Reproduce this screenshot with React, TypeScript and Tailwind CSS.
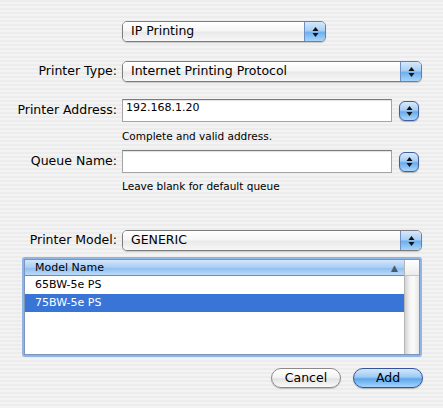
import React from 'react';

function Arrows() {
  return (
    <svg width="7" height="12" viewBox="0 0 7 12">
      <path d="M3.5 1L6.5 5H0.5z" fill="#111" />
      <path d="M0.5 7h6l-3 4z" fill="#111" />
    </svg>
  );
}

function Popup({ label, className }: { label: string; className: string }) {
  return (
    <div
      className={`flex h-[21px] overflow-hidden rounded-[5px] border border-[#7c7c7c] shadow-[0_1px_1px_rgba(0,0,0,0.18)] ${className}`}
    >
      <div className="flex flex-1 items-center bg-[linear-gradient(to_bottom,#ffffff_0%,#f6f6f6_45%,#e9e9e9_55%,#f7f7f7_100%)] pl-[8px] text-[12.5px]">
        {label}
      </div>
      <div className="flex w-[21px] items-center justify-center border-l border-[#6d8fc4] bg-[linear-gradient(to_bottom,#d6e8fb_0%,#a9cff5_45%,#6fb0ee_55%,#a6d5fb_100%)]">
        <Arrows />
      </div>
    </div>
  );
}

function Stepper() {
  return (
    <div className="ml-[7px] flex h-[20px] w-[20px] items-center justify-center rounded-[6px] border border-[#3f619b] bg-[linear-gradient(to_bottom,#d9eafc_0%,#a7cdf4_45%,#6aaaeb_55%,#a9d7fc_100%)] shadow-[0_1px_1px_rgba(0,0,0,0.25)]">
      <Arrows />
    </div>
  );
}

function Field({ value }: { value?: string }) {
  return (
    <div className="h-[23px] w-[270px] border border-[#a4a4a4] border-t-[#7b7b7b] bg-white pl-[3px] pt-[1px] text-[11px] leading-[14px] shadow-[inset_0_1px_1px_rgba(0,0,0,0.12)]">
      {value}
    </div>
  );
}

export default function App() {
  return (
    <div className="h-[408px] w-[443px] overflow-hidden bg-[repeating-linear-gradient(to_bottom,#ececec_0px,#ececec_2px,#f3f3f3_2px,#f3f3f3_4px)] font-['DejaVu_Sans',sans-serif] text-black">
      <div className="mt-[21px] flex pl-[122px]">
        <Popup label="IP Printing" className="w-[204px]" />
      </div>

      <div className="mt-[19px] flex items-center">
        <div className="w-[117px] text-right text-[12.5px]">Printer Type:</div>
        <Popup label="Internet Printing Protocol" className="ml-[5px] w-[300px]" />
      </div>

      <div className="mt-[17px] flex items-center">
        <div className="w-[117px] text-right text-[12.5px]">Printer Address:</div>
        <div className="ml-[5px] flex items-center">
          <Field value="192.168.1.20" />
          <Stepper />
        </div>
      </div>
      <div className="mt-[8px] pl-[122px] text-[10.5px] leading-[13px]">Complete and valid address.</div>

      <div className="mt-[7px] flex items-center">
        <div className="w-[117px] text-right text-[12.5px]">Queue Name:</div>
        <div className="ml-[5px] flex items-center">
          <Field />
          <Stepper />
        </div>
      </div>
      <div className="mt-[7px] pl-[122px] text-[10.5px] leading-[13px]">Leave blank for default queue</div>

      <div className="mt-[37px] flex items-center">
        <div className="w-[117px] text-right text-[12.5px]">Printer Model:</div>
        <Popup label="GENERIC" className="ml-[5px] w-[300px]" />
      </div>

      {/* model list with focus ring */}
      <div className="ml-[22px] mt-[6px] h-[100px] w-[400px] rounded-[3px] border-2 border-[#8fb4e6]">
        <div className="flex h-full border border-[#7f95b8]">
          <div className="flex-1 bg-white text-[11px]">
            <div className="flex h-[16px] items-center justify-between border-b border-[#6a8cc4] bg-[linear-gradient(to_bottom,#d3e6fb_0%,#a9cdf3_50%,#8ebdee_52%,#b9dbfa_100%)] pl-[10px] pr-[6px] leading-[16px]">
              <span>Model Name</span>
              <span className="text-[9px] text-[#45596f]">▲</span>
            </div>
            <div className="flex h-[18px] items-center pl-[10px]">65BW-5e PS</div>
            <div className="flex h-[18px] items-center bg-[#3875d7] pl-[10px] text-white">75BW-5e PS</div>
          </div>
          <div className="flex w-[15px] flex-col border-l border-[#b5b5b5]">
            <div className="h-[16px] border-b border-[#c4c4c4] bg-[linear-gradient(to_bottom,#ffffff,#ececec)]" />
            <div className="flex-1 bg-[linear-gradient(to_right,#d2d2d2,#f4f4f4_35%,#fbfbfb_60%,#e6e6e6)]" />
          </div>
        </div>
      </div>

      <div className="mt-[11px] flex justify-end gap-[12px] pr-[20px]">
        <div className="flex h-[20px] w-[70px] items-center justify-center rounded-full border border-[#8a8a8a] bg-[linear-gradient(to_bottom,#ffffff_0%,#f4f4f4_45%,#e2e2e2_55%,#fafafa_100%)] text-[12.5px] shadow-[0_1px_1px_rgba(0,0,0,0.2)]">
          Cancel
        </div>
        <div className="flex h-[20px] w-[70px] items-center justify-center rounded-full border border-[#33549a] bg-[linear-gradient(to_bottom,#d3e7fc_0%,#9ccaf4_45%,#5fa6ec_55%,#a4d6fc_100%)] text-[12.5px] shadow-[0_1px_1px_rgba(0,0,0,0.25)]">
          Add
        </div>
      </div>
    </div>
  );
}
